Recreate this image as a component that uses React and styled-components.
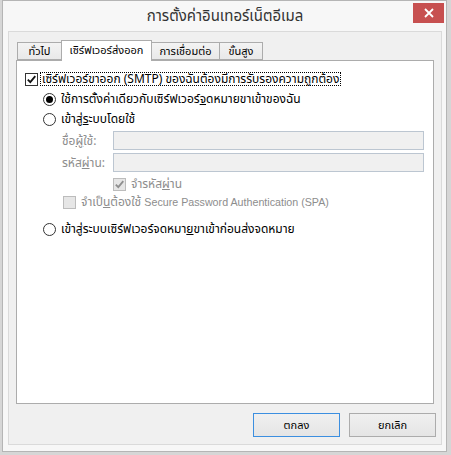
import React from "react";
import styled, { createGlobalStyle } from "styled-components";

const Global = createGlobalStyle`
  html, body { margin: 0; padding: 0; }
  body {
    width: 451px;
    height: 455px;
    overflow: hidden;
    background: #d6d6d6;
    font-family: Tahoma, "Noto Sans Thai", "Leelawadee UI", "Liberation Sans", sans-serif;
    font-size: 12px;
    color: #000;
  }
`;

const Window = styled.div`
  box-sizing: border-box;
  margin-left: 2px;
  width: 445px;
  height: 452px;
  border: 1px solid #b5b5b5;
  background: #f7f7f7;
  padding: 0 4px 6px 5px;
  display: flex;
  flex-direction: column;
`;

const TitleBar = styled.div`
  height: 30px;
  display: grid;
  grid-template-columns: 1fr auto 1fr;
  align-items: start;
`;

const Title = styled.div`
  grid-column: 2;
  padding-top: 7px;
  font-size: 15px;
  line-height: 18px;
  color: #333;
`;

const Close = styled.div`
  grid-column: 3;
  justify-self: end;
  margin-top: 2px;
  margin-right: -2px;
  width: 31px;
  height: 20px;
  background: #c75050;
  display: flex;
  align-items: center;
  justify-content: center;
`;

const Client = styled.div`
  flex: 1;
  box-sizing: border-box;
  border: 1px solid #dadada;
  background: #f0f0f0;
  padding: 8px 5px 7px 7px;
  display: flex;
  flex-direction: column;
`;

const TabStrip = styled.div`
  display: flex;
  align-items: flex-end;
  height: 20px;
  padding-left: 1px;
`;

const Tab = styled.div`
  box-sizing: border-box;
  width: ${(p) => p.$w}px;
  height: ${(p) => (p.$active ? 21 : 18)}px;
  margin-bottom: ${(p) => (p.$active ? -1 : 0)}px;
  border: 1px solid #acacac;
  border-bottom: ${(p) => (p.$active ? "none" : "1px solid #acacac")};
  margin-left: ${(p) => (p.$first ? 0 : -1)}px;
  background: ${(p) => (p.$active ? "#fff" : "linear-gradient(#f3f3f3, #e9e9e9)")};
  position: relative;
  z-index: ${(p) => (p.$active ? 1 : 0)};
  display: flex;
  align-items: center;
  justify-content: center;
  padding-bottom: ${(p) => (p.$active ? 2 : 0)}px;
  font-size: 11px;
  white-space: nowrap;
`;

const Panel = styled.div`
  flex: 1;
  box-sizing: border-box;
  margin-right: 2px;
  border: 1px solid #acacac;
  background: #fff;
  padding: 11px 8px 0 8px;
  display: flex;
  flex-direction: column;
`;

const Row = styled.div`
  display: flex;
  align-items: center;
  height: 14px;
  margin-top: ${(p) => p.$top || 0}px;
  padding-left: ${(p) => p.$indent || 0}px;
  line-height: 14px;
  white-space: nowrap;
  color: ${(p) => (p.$disabled ? "#8d8d8d" : "#000")};
`;

const Label = styled.span`
  margin-left: ${(p) => p.$gap || 3}px;
  padding: 0 1px;
  border: 1px dotted ${(p) => (p.$focus ? "#000" : "transparent")};
  line-height: 12px;
`;

const Key = styled.span`
  text-decoration: underline;
`;

const Latin = styled.span`
  font-family: "Liberation Sans", Arial, sans-serif;
  font-size: 10.7px;
`;

const Box = styled.span`
  box-sizing: border-box;
  width: 13px;
  height: 13px;
  flex: none;
  border: 1px solid ${(p) => (p.$disabled ? "#bcbcbc" : "#333")};
  background: ${(p) => (p.$disabled ? "#e6e6e6" : "#fff")};
  display: flex;
  align-items: center;
  justify-content: center;
`;

const Radio = styled.span`
  box-sizing: border-box;
  width: 13px;
  height: 13px;
  flex: none;
  border-radius: 50%;
  border: 1px solid #333;
  background: #fff;
  display: flex;
  align-items: center;
  justify-content: center;
  &::after {
    content: "";
    width: 7px;
    height: 7px;
    border-radius: 50%;
    background: ${(p) => (p.$checked ? "#000" : "transparent")};
  }
`;

const FieldRow = styled.div`
  display: flex;
  align-items: center;
  margin-top: ${(p) => p.$top}px;
  padding-left: 37px;
  color: #8d8d8d;
  white-space: nowrap;
`;

const FieldLabel = styled.span`
  width: 51px;
`;

const Input = styled.div`
  box-sizing: border-box;
  width: 311px;
  height: 19px;
  border: 1px solid #bcc6d1;
  background: #f0f0f0;
`;

const Buttons = styled.div`
  display: flex;
  justify-content: flex-end;
  gap: 9px;
  margin-top: 9px;
`;

const Button = styled.div`
  box-sizing: border-box;
  width: 87px;
  height: 24px;
  border: 1px solid ${(p) => (p.$default ? "#3c8fe0" : "#acacac")};
  background: linear-gradient(#f0f0f0, #e5e5e5);
  display: flex;
  align-items: center;
  justify-content: center;
  font-size: 11px;
`;

const Check = ({ disabled }) => (
  <svg width="11" height="11" viewBox="0 0 11 11">
    <path
      d="M1.8 5.6 L4.3 8.2 L9.3 2.2"
      fill="none"
      stroke={disabled ? "#8f8f8f" : "#111"}
      strokeWidth="1.8"
    />
  </svg>
);

const CheckBox = ({ checked, disabled }) => (
  <Box $disabled={disabled}>{checked && <Check disabled={disabled} />}</Box>
);

export default function App() {
  return (
    <>
      <Global />
      <Window>
        <TitleBar>
          <Title>การตั้งค่าอินเทอร์เน็ตอีเมล</Title>
          <Close>
            <svg width="10" height="10" viewBox="0 0 10 10">
              <path d="M1 1 L9 9 M9 1 L1 9" stroke="#fff" strokeWidth="1.8" />
            </svg>
          </Close>
        </TitleBar>
        <Client>
          <TabStrip>
            <Tab $w={45} $first>ทั่วไป</Tab>
            <Tab $w={91} $active>เซิร์ฟเวอร์ส่งออก</Tab>
            <Tab $w={69}>การเชื่อมต่อ</Tab>
            <Tab $w={44}>ขั้นสูง</Tab>
          </TabStrip>
          <Panel>
            <Row>
              <CheckBox checked />
              <Label $focus $gap={2}>
                เซิร์ฟเวอร์ขาออก (SMTP) ของฉันต้องมีการรับรองความถูกต้อง
              </Label>
            </Row>
            <Row $top={6} $indent={18}>
              <Radio $checked />
              <Label>
                ใช้การตั้งค่าเดียวกับเซิร์ฟเวอร์<Key>จ</Key>ดหมายขาเข้าของฉัน
              </Label>
            </Row>
            <Row $top={6} $indent={18}>
              <Radio />
              <Label>
                เข้าสู่<Key>ร</Key>ะบบโดยใช้
              </Label>
            </Row>
            <FieldRow $top={5}>
              <FieldLabel>
                ชื่อ<Key>ผู้</Key>ใช้:
              </FieldLabel>
              <Input />
            </FieldRow>
            <FieldRow $top={3}>
              <FieldLabel>
                รหัส<Key>ผ่</Key>าน:
              </FieldLabel>
              <Input />
            </FieldRow>
            <Row $top={5} $indent={88} $disabled>
              <CheckBox checked disabled />
              <Label>
                จำรหัส<Key>ผ่</Key>าน
              </Label>
            </Row>
            <Row $top={4} $indent={38} $disabled>
              <CheckBox disabled />
              <Label>
                จำเป็<Key>น</Key>ต้องใช้ <Latin>Secure Password Authentication (SPA)</Latin>
              </Label>
            </Row>
            <Row $top={13} $indent={18}>
              <Radio />
              <Label>
                เข้าสู่ระบบเซิร์ฟเวอร์จดหมา<Key>ย</Key>ขาเข้าก่อนส่งจดหมาย
              </Label>
            </Row>
          </Panel>
          <Buttons>
            <Button $default>ตกลง</Button>
            <Button>ยกเลิก</Button>
          </Buttons>
        </Client>
      </Window>
    </>
  );
}
